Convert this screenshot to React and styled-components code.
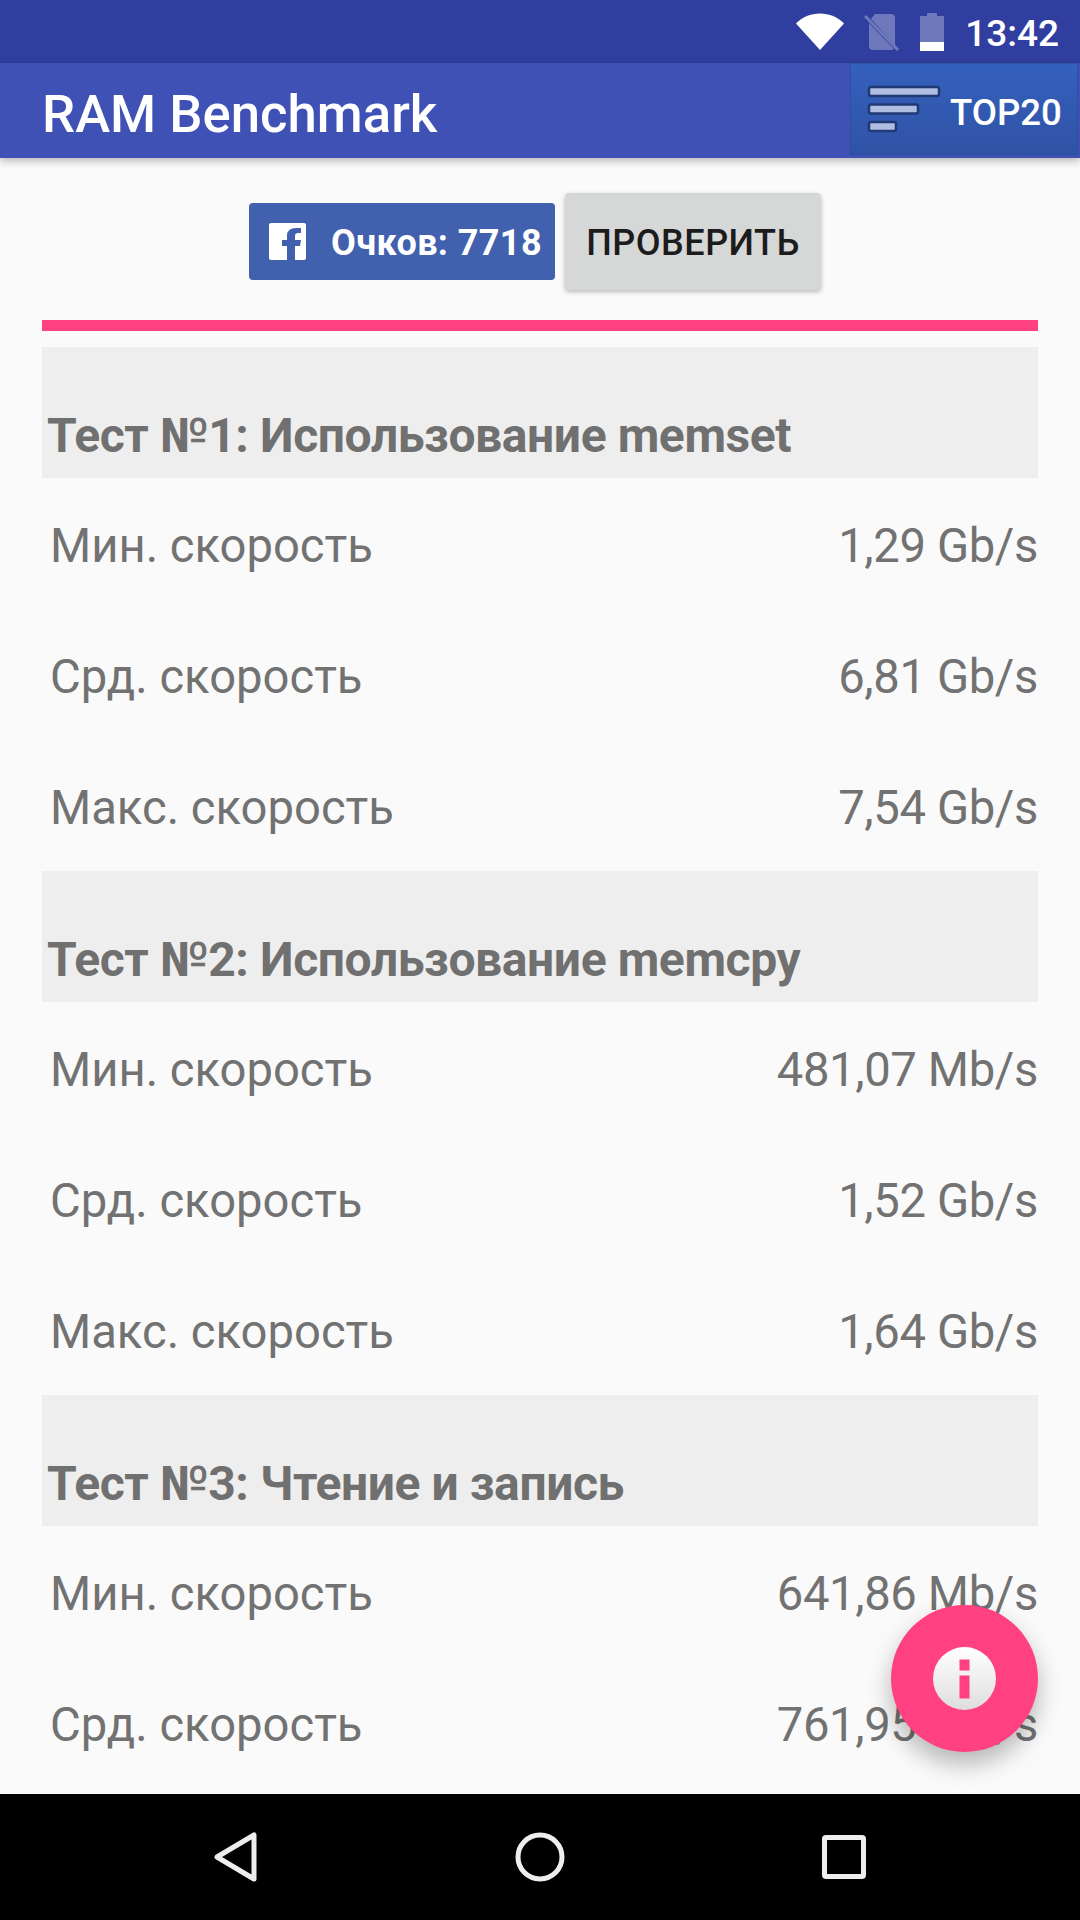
import React from "react";
import styled, { createGlobalStyle } from "styled-components";

const Global = createGlobalStyle`
  html, body { margin: 0; padding: 0; background: #fafafa; }
  * { box-sizing: border-box; }
`;

const Screen = styled.div`
  position: relative;
  width: 1080px;
  height: 1920px;
  display: flex;
  flex-direction: column;
  overflow: hidden;
  background: #fafafa;
  font-family: Roboto, "Liberation Sans", sans-serif;
`;

const StatusBar = styled.div`
  height: 63px;
  flex: none;
  background: #303f9f;
  display: flex;
  align-items: center;
  justify-content: flex-end;
  padding-right: 21px;
`;

const StatusIcon = styled.svg`
  display: block;
  flex: none;
  margin-right: ${(p) => p.$gap}px;
`;

const Clock = styled.span`
  color: #fff;
  font-size: 37px;
  font-weight: 500;
  line-height: 63px;
  padding-top: 3px;
`;

const AppBar = styled.div`
  position: relative;
  z-index: 2;
  height: 95px;
  flex: none;
  background: #3f51b5;
  display: flex;
  align-items: flex-start;
  justify-content: space-between;
  padding-left: 42px;
  box-shadow: 0 3px 8px rgba(0, 0, 0, 0.28);
`;

const Title = styled.h1`
  margin: 0;
  padding-top: 4px;
  color: #fff;
  font-size: 52.7px;
  font-weight: 500;
  line-height: 95px;
`;

const TopButton = styled.div`
  width: 228px;
  height: 92px;
  margin-right: 2px;
  display: flex;
  align-items: center;
  padding-left: 17px;
  gap: 9px;
  background: linear-gradient(180deg, #3460bd 0%, #3053a6 100%);
  box-shadow: inset 0 0 0 1px rgba(40, 75, 150, 0.6);
`;

const TopLabel = styled.span`
  color: #fff;
  font-size: 36.6px;
  font-weight: 500;
  padding-top: 6px;
`;

const Content = styled.main`
  flex: 1;
  min-height: 0;
  overflow: hidden;
  padding: 0 42px;
`;

const Actions = styled.div`
  height: 162px;
  display: flex;
  align-items: center;
  gap: 10px;
  padding: 5px 0 0 207px;
`;

const FbButton = styled.div`
  width: 306px;
  height: 77px;
  border-radius: 4px;
  background: #4160ae;
  display: flex;
  align-items: center;
  padding-left: 20px;
  gap: 25px;
  color: #fff;
  font-size: 36px;
  font-weight: 700;
  letter-spacing: 0.4px;
  line-height: 44px;
  white-space: nowrap;
`;

const FbLabel = styled.span`
  padding-top: 2px;
`;

const CheckButton = styled.div`
  width: 256px;
  height: 97px;
  border-radius: 4px;
  background: #d6d7d7;
  box-shadow: 0 2px 5px rgba(0, 0, 0, 0.26);
  display: flex;
  align-items: center;
  justify-content: center;
  padding-top: 2px;
  color: #1c1c1c;
  font-size: 36px;
  font-weight: 500;
  letter-spacing: 0.5px;
`;

const Divider = styled.div`
  height: 11px;
  background: #ff4081;
  margin-bottom: 16px;
`;

const SectionHead = styled.h2`
  margin: 0;
  height: 131px;
  background: #eeeeee;
  color: #707070;
  font-size: 48px;
  font-weight: 700;
  letter-spacing: -0.4px;
  display: flex;
  align-items: flex-end;
  padding: 0 0 14px 5px;
  line-height: 56px;
`;

const Row = styled.div`
  height: 131px;
  display: flex;
  align-items: center;
  justify-content: space-between;
  padding: 4px 0 0 8px;
  color: #727272;
  font-size: 47.2px;
  font-weight: 400;
`;

const Value = styled.span`
  letter-spacing: -0.35px;
`;

const Fab = styled.div`
  position: absolute;
  left: 891px;
  top: 1605px;
  width: 147px;
  height: 147px;
  border-radius: 50%;
  background: #ff4081;
  display: flex;
  align-items: center;
  justify-content: center;
  box-shadow: 0 12px 24px rgba(0, 0, 0, 0.28);
`;

const NavBar = styled.nav`
  height: 126px;
  flex: none;
  background: #000;
  display: flex;
  align-items: center;
  justify-content: space-between;
  padding: 0 210px;
`;

const sections = [
  { title: "Тест №1: Использование memset", v: ["1,29 Gb/s", "6,81 Gb/s", "7,54 Gb/s"] },
  { title: "Тест №2: Использование memcpy", v: ["481,07 Mb/s", "1,52 Gb/s", "1,64 Gb/s"] },
  { title: "Тест №3: Чтение и запись", v: ["641,86 Mb/s", "761,95 Mb/s"] },
];
const labels = ["Мин. скорость", "Срд. скорость", "Макс. скорость"];

export default function App() {
  return (
    <Screen>
      <Global />
      <StatusBar>
        <StatusIcon $gap={20} width="48" height="37" viewBox="0 0 46 37" preserveAspectRatio="none">
          <path d="M0 10.5C6 4 14 0.5 23 0.5S40 4 46 10.5L23 37Z" fill="#fff" />
        </StatusIcon>
        <StatusIcon $gap={20} width="36" height="38" viewBox="0 0 36 38">
          <path d="M11 1H27Q31 1 31 5V32L7 6Z M5 10V33Q5 37 9 37H27Q29 37 30 36Z" fill="#fff" fillOpacity="0.3" />
          <path d="M1 3L34 37" stroke="#fff" strokeOpacity="0.3" strokeWidth="3" />
        </StatusIcon>
        <StatusIcon $gap={21} width="24" height="38" viewBox="0 0 24 38">
          <path d="M7 0H17V3H24V29H0V3H7Z" fill="#fff" fillOpacity="0.3" />
          <rect x="0" y="29" width="24" height="9" fill="#fff" />
        </StatusIcon>
        <Clock>13:42</Clock>
      </StatusBar>

      <AppBar>
        <Title>RAM Benchmark</Title>
        <TopButton>
          <svg width="74" height="48" viewBox="0 0 74 48">
            <g fill="#aebde0" stroke="#1f3a75" strokeWidth="2.5">
              <rect x="2" y="2" width="70" height="9" rx="2" />
              <rect x="2" y="19.5" width="49" height="9" rx="2" />
              <rect x="2" y="37" width="27" height="9" rx="2" />
            </g>
          </svg>
          <TopLabel>TOP20</TopLabel>
        </TopButton>
      </AppBar>

      <Content>
        <Actions>
          <FbButton>
            <svg width="37" height="37" viewBox="0 0 37 37">
              <path
                d="M2 0H35Q37 0 37 2V35Q37 37 35 37H26V23H31L32 17H26V13Q26 10 29 10H32V5H27Q18 5 18 13V17H13V23H18V37H2Q0 37 0 35V2Q0 0 2 0Z"
                fill="#fff"
              />
            </svg>
            <FbLabel>Очков: 7718</FbLabel>
          </FbButton>
          <CheckButton>ПРОВЕРИТЬ</CheckButton>
        </Actions>
        <Divider />
        {sections.map((s) => (
          <section key={s.title}>
            <SectionHead>{s.title}</SectionHead>
            {s.v.map((val, i) => (
              <Row key={labels[i]}>
                <span>{labels[i]}</span>
                <Value>{val}</Value>
              </Row>
            ))}
          </section>
        ))}
      </Content>

      <Fab>
        <svg width="63" height="63" viewBox="0 0 63 63">
          <defs>
            <linearGradient id="fabInfo" x1="0" y1="0" x2="0" y2="1">
              <stop offset="0" stopColor="#ffffff" />
              <stop offset="1" stopColor="#dedede" />
            </linearGradient>
          </defs>
          <circle cx="31.5" cy="31.5" r="31.5" fill="url(#fabInfo)" />
          <rect x="26.5" y="12.5" width="10" height="11" fill="#ff4081" />
          <rect x="26.5" y="28.5" width="10" height="23" fill="#ff4081" />
        </svg>
      </Fab>

      <NavBar>
        <svg width="52" height="52" viewBox="0 0 52 52">
          <path d="M44 4V48L7 26Z" fill="none" stroke="#eee" strokeWidth="5" strokeLinejoin="round" />
        </svg>
        <svg width="52" height="52" viewBox="0 0 52 52">
          <circle cx="26" cy="26" r="22" fill="none" stroke="#eee" strokeWidth="5" />
        </svg>
        <svg width="52" height="52" viewBox="0 0 52 52">
          <rect x="6.5" y="6.5" width="39" height="39" rx="1.5" fill="none" stroke="#eee" strokeWidth="5" />
        </svg>
      </NavBar>
    </Screen>
  );
}
